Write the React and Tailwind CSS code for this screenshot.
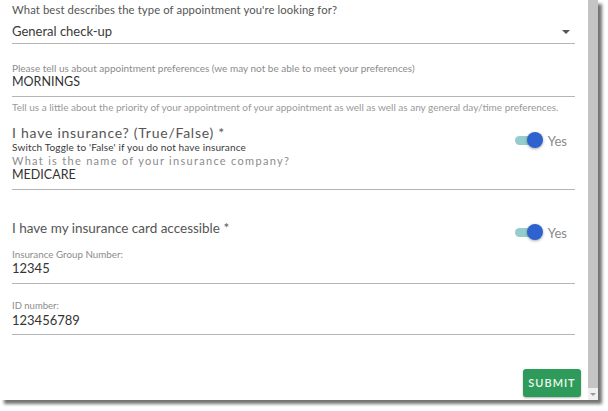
import React from "react";

function Toggle() {
  return (
    <div className="flex items-center gap-[5px]">
      <div className="relative w-[28px] h-[16px]">
        <div className="absolute left-0 top-[4px] w-[25px] h-[9px] rounded-full bg-[#95cdcd]" />
        <div className="absolute right-0 top-0 w-[16px] h-[16px] rounded-full bg-[#2e63cf] shadow-[0_1px_3px_rgba(0,0,0,0.35)]" />
      </div>
      <span className="text-[13px] leading-[16px] text-[#8a8a8a] mt-[3px]">Yes</span>
    </div>
  );
}

export default function App() {
  return (
    <div
      className="w-[608px] h-[411px] bg-white"
      style={{ fontFamily: "Lato, 'Open Sans', sans-serif" }}
    >
      <div className="w-[598px] h-[400px] bg-white flex shadow-[4px_4px_3px_rgba(0,0,0,0.55)]">
        <div className="flex-1 pl-[12px] pr-[13px] flex flex-col">
          <div className="h-[20px] text-[11.3px] leading-[20px] text-[#555] tracking-[0.1px]">
            What best describes the type of appointment you're looking for?
          </div>
          <div className="h-[24px] flex items-center justify-between border-b border-[#b5b5b5]">
            <span className="text-[13px] text-[#3a3a3a]">General check-up</span>
            <svg width="8" height="4" viewBox="0 0 8 4" className="mr-[5px]">
              <path d="M0 0 L8 0 L4 4 Z" fill="#555" />
            </svg>
          </div>

          <div className="mt-[18px] text-[10px] leading-[12px] text-[#8c8c8c]">
            Please tell us about appointment preferences (we may not be able to meet your preferences)
          </div>
          <div className="text-[12.5px] leading-[16px] text-[#333] pb-[6px] border-b border-[#b5b5b5]">
            MORNINGS
          </div>
          <div className="mt-[4px] text-[10px] leading-[12px] text-[#999]">
            Tell us a little about the priority of your appointment of your appointment as well as well as any general day/time preferences.
          </div>

          <div className="mt-[11px] flex justify-between border-b border-[#b5b5b5] pb-[6px]">
            <div className="flex flex-col">
              <div className="text-[14px] leading-[18px] text-[#555] tracking-[0.75px]">
                I have insurance? (True/False) *
              </div>
              <div className="text-[10px] leading-[10px] text-[#3a3a3a] tracking-[0.15px]">
                Switch Toggle to 'False' if you do not have insurance
              </div>
              <div className="mt-[3px] text-[11px] leading-[12px] text-[#8c8c8c] tracking-[1.3px]">
                What is the name of your insurance company?
              </div>
              <div className="text-[12.5px] leading-[16px] text-[#333]">MEDICARE</div>
            </div>
            <div className="mt-[6px] pr-[8px]">
              <Toggle />
            </div>
          </div>

          <div className="mt-[29px] h-[18px] flex justify-between items-start">
            <div className="text-[13.5px] leading-[18px] text-[#555]">I have my insurance card accessible *</div>
            <div className="mt-[3px] pr-[8px]">
              <Toggle />
            </div>
          </div>

          <div className="mt-[11px] text-[9.8px] leading-[12px] text-[#8c8c8c]">Insurance Group Number:</div>
          <div className="text-[13px] leading-[16px] text-[#333] pb-[7px] border-b border-[#b5b5b5]">12345</div>

          <div className="mt-[16px] text-[9.5px] leading-[12px] text-[#8c8c8c]">ID number:</div>
          <div className="text-[13px] leading-[16px] text-[#333] pb-[6px] border-b border-[#b5b5b5]">123456789</div>

          <div className="mt-[34px] flex justify-end mr-[-6px]">
            <button className="w-[58px] h-[28px] rounded-[3px] bg-[#2f9b5a] text-[#eef7ee] text-[11px] tracking-[1px] font-semibold shadow-[0_1px_2px_rgba(0,0,0,0.3)]">
              SUBMIT
            </button>
          </div>
        </div>
        <div className="w-[10px] flex flex-col bg-[#f0f0f0]">
          <div className="flex-1 bg-[#c4c4c4]" />
          <div className="h-[12px] flex items-center justify-center">
            <svg width="6" height="3" viewBox="0 0 6 3">
              <path d="M0 0 L6 0 L3 3 Z" fill="#9a9a9a" />
            </svg>
          </div>
        </div>
      </div>
    </div>
  );
}
